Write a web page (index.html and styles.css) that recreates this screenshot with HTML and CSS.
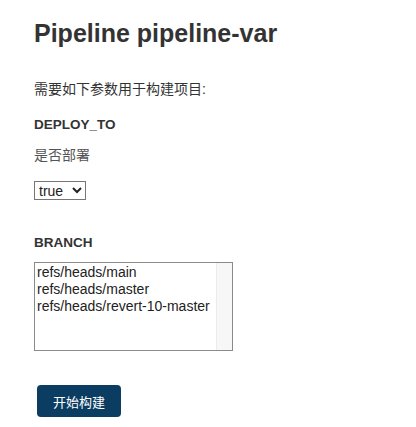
FILE: index.html
```html
<!DOCTYPE html>
<html lang="zh">

<head>
    <meta charset="utf-8">
    <meta name="viewport" content="width=device-width, initial-scale=1.0">
    <title>Pipeline pipeline-var</title>
    <link rel="stylesheet" href="styles.css">
</head>

<body>
    <main class="indhold">
        <h1>Pipeline pipeline-var</h1>
        <p class="intro">需要如下参数用于构建项目:</p>

        <div class="param">
            <h2>DEPLOY_TO</h2>
            <p class="beskriv">是否部署</p>
            <select class="vaelg">
                <option>true</option>
                <option>false</option>
            </select>
        </div>

        <div class="param">
            <h2>BRANCH</h2>
            <div class="liste">
                <div class="punkter">
                    <div>refs/heads/main</div>
                    <div>refs/heads/master</div>
                    <div>refs/heads/revert-10-master</div>
                </div>
                <div class="rulle"></div>
            </div>
        </div>

        <button class="knap">开始构建</button>
    </main>
</body>

</html>
```

FILE: styles.css
```css
body {
    margin: 0;
    font-family: "Liberation Sans", Arial, "Noto Sans CJK SC", sans-serif;
    color: #333;
    background: #fff;
}

.indhold {
    padding: 18px 34px;
}

h1 {
    font-size: 25px;
    font-weight: bold;
    margin: 0 0 30px;
    line-height: 30px;
}

.intro {
    font-size: 14px;
    margin: 0 0 19px;
}

.param h2 {
    font-size: 13.5px;
    font-weight: bold;
    margin: 0 0 12px;
}

.beskriv {
    font-size: 14px;
    color: #555;
    margin: 0 0 17px;
}

.vaelg {
    font-family: inherit;
    font-size: 14px;
    height: 19px;
    margin-bottom: 35px;
    border: 1px solid #767676;
    border-radius: 0;
    background: #fff;
    color: #222;
}

.liste {
    display: flex;
    width: 197px;
    height: 87px;
    border: 1px solid #8a8a8a;
    font-size: 14px;
    color: #222;
    margin-bottom: 34px;
}

.punkter {
    flex: 1;
    padding: 1px 2px;
    line-height: 17px;
}

.rulle {
    width: 15px;
    background: #f7f7f7;
    border-left: 1px solid #ececec;
}

.knap {
    margin-left: 3px;
    width: 84px;
    height: 32px;
    border: none;
    border-radius: 4px;
    background: #0b3d62;
    color: #fff;
    font-size: 13px;
    font-family: inherit;
}
```
